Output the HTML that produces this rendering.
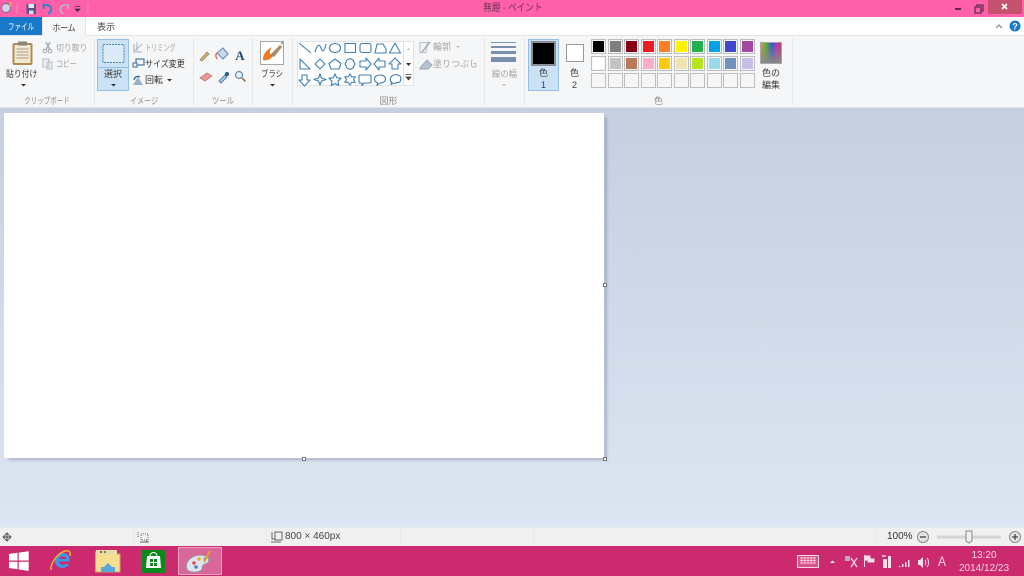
<!DOCTYPE html>
<html lang="ja"><head><meta charset="utf-8"><title>無題 - ペイント</title>
<style>
html,body{margin:0;padding:0;width:1024px;height:576px;overflow:hidden;background:#fff}
body{position:relative;font-family:"Liberation Sans","Noto Sans CJK JP",sans-serif;font-size:9px;color:#444}
div{position:absolute;box-sizing:border-box}
.t{white-space:nowrap;line-height:12px;font-size:9px;color:#3c3c3c;transform-origin:left center}
.g{color:#a4a4a4}.c{text-align:center;transform-origin:center center}
.sep{width:1px;top:38px;height:67px;background:#e6e8ea}
.lab{top:95px;height:12px;line-height:12px;font-size:9px;color:#8e8e8e;text-align:center;white-space:nowrap}
.p{width:15px;height:15px;border:1px solid #bdbdbd;background:#f5f6f7}
.p i{position:absolute;left:1px;top:1px;width:11px;height:11px;display:block}
</style></head><body>
<div style="left:0;top:0;width:1024px;height:17px;background:#ff60a9"></div>
<div class="t c" style="left:0;top:3px;width:1024px;color:#6a3550;font-size:10px;padding-left:2px;transform:scaleX(.86)">無題 - ペイント</div>
<div style="left:988px;top:0;width:34px;height:14px;background:#c4526e"></div>

<div style="left:0;top:17px;width:1024px;height:19px;background:#fff;border-bottom:1px solid #e4e4e4"></div>
<div style="left:0;top:17px;width:42px;height:18px;background:#1a78c8"></div>
<div class="t c" style="left:0;top:21px;width:42px;color:#fff;transform:scaleX(.72)">ファイル</div>
<div style="left:42px;top:17px;width:44px;height:20px;background:#f5f6f7;border:1px solid #e4e4e4;border-bottom:0;border-top:0"></div>
<div class="t c" style="left:42px;top:22px;width:44px;transform:scaleX(.87)">ホーム</div>
<div class="t c" style="left:86px;top:21px;width:40px">表示</div>

<div style="left:0;top:36px;width:1024px;height:72px;background:#f5f6f7;border-bottom:1px solid #dfe3e8"></div>
<div class="sep" style="left:94px"></div><div class="sep" style="left:193px"></div><div class="sep" style="left:252px"></div><div class="sep" style="left:292px"></div><div class="sep" style="left:484px"></div><div class="sep" style="left:524px"></div><div class="sep" style="left:792px"></div>

<div style="left:97px;top:39px;width:32px;height:52px;background:#cbe2f6;border:1px solid #94bfe6"></div>
<div style="left:98px;top:67px;width:30px;height:1px;background:#94bfe6"></div>
<div style="left:528px;top:39px;width:31px;height:52px;background:#cbe2f6;border:1px solid #94bfe6"></div>

<div class="t" style="left:6px;top:68px;color:#333;transform:scaleX(.87)">貼り付け</div>
<div class="t g" style="left:56px;top:42px;transform:scaleX(.87)">切り取り</div>
<div class="t g" style="left:56px;top:58px;transform:scaleX(.75)">コピー</div>
<div class="lab" style="left:0;width:94px;transform:scaleX(.72)">クリップボード</div>
<div class="t c" style="left:97px;top:68px;width:32px">選択</div>
<div class="t g" style="left:145px;top:42px;transform:scaleX(.68)">トリミング</div>
<div class="t" style="left:145px;top:58px;color:#333;transform:scaleX(.89)">サイズ変更</div>
<div class="t" style="left:145px;top:74px;color:#333">回転</div>
<div class="lab" style="left:95px;width:98px;transform:scaleX(.78)">イメージ</div>
<div class="lab" style="left:194px;width:58px;transform:scaleX(.82)">ツール</div>
<div class="t c" style="left:253px;top:68px;width:38px;transform:scaleX(.82)">ブラシ</div>
<div class="lab" style="left:293px;width:191px">図形</div>
<div class="t g" style="left:433px;top:41px">輪郭</div>
<div class="t g" style="left:433px;top:58px">塗りつぶし</div>
<div class="t g c" style="left:485px;top:68px;width:39px;transform:scaleX(.93)">線の幅</div>
<div class="t c" style="left:528px;top:67px;width:31px">色<br>1</div>
<div class="t c" style="left:559px;top:67px;width:31px">色<br>2</div>
<div class="t c" style="left:755px;top:67px;width:32px">色の<br>編集</div>
<div class="lab" style="left:525px;width:267px">色</div>

<div style="left:531px;top:41px;width:25px;height:25px;background:#000;border:2px solid #8a8f96"></div>
<div style="left:566px;top:44px;width:18px;height:18px;background:#fff;border:1px solid #9a9a9a"></div>

<div class="p" style="left:591px;top:39px"><i style="background:#000"></i></div>
<div class="p" style="left:608px;top:39px"><i style="background:#7f7f7f"></i></div>
<div class="p" style="left:624px;top:39px"><i style="background:#880015"></i></div>
<div class="p" style="left:641px;top:39px"><i style="background:#ed1c24"></i></div>
<div class="p" style="left:657px;top:39px"><i style="background:#ff7f27"></i></div>
<div class="p" style="left:674px;top:39px"><i style="background:#fff200"></i></div>
<div class="p" style="left:690px;top:39px"><i style="background:#22b14c"></i></div>
<div class="p" style="left:707px;top:39px"><i style="background:#00a2e8"></i></div>
<div class="p" style="left:723px;top:39px"><i style="background:#3f48cc"></i></div>
<div class="p" style="left:740px;top:39px"><i style="background:#a349a4"></i></div>
<div class="p" style="left:591px;top:56px"><i style="background:#fff"></i></div>
<div class="p" style="left:608px;top:56px"><i style="background:#c3c3c3"></i></div>
<div class="p" style="left:624px;top:56px"><i style="background:#b97a57"></i></div>
<div class="p" style="left:641px;top:56px"><i style="background:#ffaec9"></i></div>
<div class="p" style="left:657px;top:56px"><i style="background:#ffc90e"></i></div>
<div class="p" style="left:674px;top:56px"><i style="background:#efe4b0"></i></div>
<div class="p" style="left:690px;top:56px"><i style="background:#b5e61d"></i></div>
<div class="p" style="left:707px;top:56px"><i style="background:#99d9ea"></i></div>
<div class="p" style="left:723px;top:56px"><i style="background:#7092be"></i></div>
<div class="p" style="left:740px;top:56px"><i style="background:#c8bfe7"></i></div>
<div class="p" style="left:591px;top:73px"></div><div class="p" style="left:608px;top:73px"></div><div class="p" style="left:624px;top:73px"></div><div class="p" style="left:641px;top:73px"></div><div class="p" style="left:657px;top:73px"></div><div class="p" style="left:674px;top:73px"></div><div class="p" style="left:690px;top:73px"></div><div class="p" style="left:707px;top:73px"></div><div class="p" style="left:723px;top:73px"></div><div class="p" style="left:740px;top:73px"></div>

<div style="left:0;top:108px;width:1024px;height:419px;background:linear-gradient(#c6cfdf,#dce5f2)"></div>
<div style="left:9px;top:118px;width:598px;height:342px;background:rgba(90,105,135,.25);box-shadow:0 0 2px 1px rgba(90,105,135,.18)"></div>
<div style="left:4px;top:113px;width:600px;height:345px;background:#fff"></div>
<div style="left:603px;top:283px;width:4px;height:4px;background:#fff;border:1px solid #777"></div>
<div style="left:302px;top:457px;width:4px;height:4px;background:#fff;border:1px solid #777"></div>
<div style="left:603px;top:457px;width:4px;height:4px;background:#fff;border:1px solid #777"></div>

<div style="left:0;top:527px;width:1024px;height:19px;background:#f0f0f0;border-top:1px solid #e6e8ea"></div>
<div class="sep" style="left:133px;top:528px;height:18px"></div><div class="sep" style="left:266px;top:528px;height:18px"></div><div class="sep" style="left:400px;top:528px;height:18px"></div><div class="sep" style="left:533px;top:528px;height:18px"></div><div class="sep" style="left:875px;top:528px;height:18px"></div>
<div class="t" style="left:285px;top:531px;color:#444;font-size:10px">800 × 460px</div>
<div class="t" style="left:887px;top:531px;color:#333;font-size:10px">100%</div>

<div style="left:0;top:546px;width:1024px;height:30px;background:#cc2a6e"></div>
<div style="left:178px;top:547px;width:44px;height:28px;background:#d9689a;border:1px solid #eba6c4"></div>
<div class="t c" style="left:952px;top:549px;width:64px;color:#f5d5e3;font-size:10px;line-height:13px">13:20<br>2014/12/23</div>
<div class="t" style="left:938px;top:555px;color:#f5d5e3;font-size:14px;transform:scaleX(.85)">A</div>

<svg width="1024" height="576" viewBox="0 0 1024 576" style="position:absolute;left:0;top:0" fill="none">
<!-- quick access -->
<circle cx="6" cy="8" r="4.500" fill="#d8d4e8" stroke="#6a6a9a"/><rect x="9" y="2" width="3" height="5" fill="#e0a040"/>
<path d="M17 3v11M88 3v11" stroke="#e890b8"/>
<rect x="26.500" y="4" width="9.500" height="10" fill="#54568a"/><rect x="28.500" y="4" width="5.500" height="4" fill="#e6e6f2"/><rect x="29" y="10.500" width="4.500" height="3.500" fill="#d8d8e6"/>
<path d="M43.500 9V5h4M44 5.500c4-1.500 8 1 7 5-.4 1.500-1.500 2.500-3 3" stroke="#1e88c8" stroke-width="1.800"/>
<path d="M68 9V5h-4M67.500 5.500c-4-1.500-8 1-7 5 .4 1.500 1.500 2.500 3 3" stroke="#c8a8bc" stroke-width="1.800"/>
<path d="M75 6.500h5M75 9h5l-2.500 2.500z" fill="#333" stroke="#333" stroke-width=".7"/>
<!-- window controls -->
<rect x="955" y="8" width="6" height="2" fill="#5c2c48"/>
<path d="M975 7h6v6h-6zM977 7V5h6v6h-2" stroke="#5c2c48" stroke-width="1.200"/>
<path d="M1002 4l5 5M1007 4l-5 5" stroke="#fff" stroke-width="1.700"/>
<path d="M996 28l3-3 3 3" stroke="#9a9a9a" stroke-width="1.500"/>
<circle cx="1015" cy="26" r="5.500" fill="#1a78d0"/>
<text x="1015" y="29.500" text-anchor="middle" font-size="9" font-weight="bold" fill="#fff" font-family="Liberation Sans">?</text>
<!-- clipboard -->
<rect x="13.500" y="44" width="18" height="20" rx="1" fill="#f3e9d2" stroke="#b58a50" stroke-width="2"/>
<rect x="18" y="41.500" width="9" height="4" fill="#8c8474"/>
<path d="M16.500 49h12M16.500 52h12M16.500 55h12M16.500 58h12" stroke="#a89a84"/>
<path d="M21 84h5l-2.500 2.500z" fill="#333"/>
<path d="M46 42l4 8M50 42l-4 8" stroke="#a0a4ac" stroke-width="1.300"/><circle cx="45" cy="51" r="1.800" stroke="#a0a4ac"/><circle cx="50" cy="51" r="1.800" stroke="#a0a4ac"/>
<path d="M43 59h6v8h-6zM47 62h5v7h-5z" stroke="#b6bcc6" fill="#eef1f5"/>
<!-- select -->
<rect x="103" y="44.500" width="21" height="18" stroke="#4a7fb0" stroke-dasharray="2 1" fill="#dcebf8"/>
<path d="M111 84h5l-2.500 2.500z" fill="#333"/>
<path d="M134 44v8h8M137 42v8h-3M136 50l6-6" stroke="#a8b0bc"/>
<rect x="136" y="59" width="8" height="6" stroke="#3a6a9a" stroke-width="1.100"/><rect x="133" y="63" width="4" height="4" stroke="#3a6a9a" fill="#f5f6f7"/>
<path d="M133 85l5-8 5 8z" fill="#9ab2c8"/><path d="M134 80a4 4 0 0 1 6-3" stroke="#2a6ca8" stroke-width="1.300"/>
<path d="M167 79h5l-2.500 2.500z" fill="#333"/>
<!-- tools -->
<path d="M200 60l7-8 2 2-7 7z" fill="#e0b060" stroke="#8a7a50" stroke-width=".7"/>
<path d="M217 53l6-5 5 6-5 5z" fill="#c8d8ea" stroke="#5a8ab8"/><path d="M217 53c-2 2-1 4 0 6" stroke="#e07040" stroke-width="1.500"/>
<text x="240" y="60" text-anchor="middle" font-size="13" font-weight="bold" fill="#28466e" font-family="Liberation Serif">A</text>
<path d="M200 78l7-5 5 3-7 5z" fill="#ec9a94" stroke="#b87a7a" stroke-width=".8"/>
<path d="M219 81l6-6 2 2-6 6z" fill="#a8c8e8" stroke="#406a98" stroke-width=".8"/><circle cx="227" cy="74" r="2" fill="#2a5a90"/>
<circle cx="239" cy="75" r="3.500" stroke="#6a8ab0" fill="#e6f0fa" stroke-width="1.200"/><path d="M242 78l3.500 3.500" stroke="#a87838" stroke-width="1.600"/>
<!-- brush -->
<rect x="260.500" y="41.500" width="23" height="23" fill="#fff" stroke="#a8a8a8"/>
<path d="M263 60c0-8 6-11 9-13-3 4-3 8 1 9-3 4-7 5-10 4z" fill="#ee7a22"/><path d="M270 55l10-10 2 2-8 10z" fill="#a88a68"/><path d="M281 44l2-2" stroke="#666"/>
<path d="M270 84h5l-2.500 2.500z" fill="#333"/>
<!-- shapes box -->
<rect x="297.500" y="41.500" width="116" height="44" fill="#fff" stroke="#e0e2e6"/>
<path d="M403.500 42v44" stroke="#e0e2e6"/>
<path d="M407 50l1.500-2 1.500 2z" fill="#b8b8b8"/><path d="M406 63h5l-2.500 3z" fill="#333"/>
<path d="M405.500 74.500h6M406 77h5l-2.500 3z" stroke="#444" fill="#444" stroke-width=".7"/>
<g stroke="#3f7fb8" stroke-width="1.100" stroke-linejoin="round">
<path d="M299 43l12 10"/>
<path d="M315 52c2-8 5-8 6-4s3 5 5-4"/>
<ellipse cx="335" cy="48" rx="5.500" ry="4.500"/>
<rect x="345" y="43.500" width="10.500" height="9"/>
<rect x="360" y="43.500" width="11" height="9" rx="2"/>
<path d="M375 53l2-9h6l3 5v4z"/>
<path d="M395 43l5.500 10h-11z"/>
<path d="M300 59l10 10h-10z"/>
<path d="M320 59l5 5-5 5-5-5z"/>
<path d="M335 59l6 4.500-2 5.500h-8l-2-5.500z"/>
<path d="M347 60l3-1.500 3 1.500 2 4-2 4-3 1.500-3-1.500-2-4z"/>
<path d="M360 61h6v-3l5 6-5 6v-3h-6z"/>
<path d="M385 61h-6v-3l-5 6 5 6v-3h6z"/>
<path d="M395 58l6 6h-3v5h-6v-5h-3z"/>
<path d="M302 75h5v5h3l-5.500 6-5.500-6h3z"/>
<path d="M320 74l1.500 4 4.500 1.500-4.500 1.500-1.500 4-1.500-4-4.500-1.500 4.500-1.500z"/>
<path d="M335 74l1.800 3.700 4.200.5-3 3 .8 4.300-3.800-2-3.800 2 .8-4.300-3-3 4.200-.5z"/>
<path d="M350 74l1.800 2.800h3.400l-1.700 2.700 1.700 2.800h-3.400l-1.800 2.700-1.800-2.700h-3.400l1.700-2.800-1.700-2.700h3.400z"/>
<path d="M360 75h10a1 1 0 0 1 1 1v6a1 1 0 0 1-1 1h-6l-2 2.500v-2.500h-2a1 1 0 0 1-1-1v-6a1 1 0 0 1 1-1z"/>
<path d="M380 75c3.500 0 5.500 1.800 5.500 4s-2 4-5.500 4l-3 2.500.5-2.800c-2-.7-3-2-3-3.700 0-2.200 2-4 5.500-4z"/>
<path d="M392 76c1-1.500 5-2 6.500-.5 2 0 3 2.500 2 4 .5 2-1.500 3.500-3.500 3-1.500 1-3 1-4 .5l-2 1.500.5-2.500c-1.500-1-1.500-2.500-1-3.500 0-1 .5-2 1.500-2.500z"/>
</g>
<!-- outline fill -->
<path d="M420 42.500h9l-2 2-1 8h-6z" stroke="#b8bec8" fill="#f2f4f7"/><path d="M422 52l8-10" stroke="#9aa2ae" stroke-width="1.300"/>
<path d="M420 68l7-8 5 5-4 4h-8z" fill="#b6c4d2" stroke="#9aa8b8"/>
<path d="M456 46h4l-2 2zM473 63h4l-2 2zM502 84h4l-2 2z" fill="#b8b8b8"/>
<!-- line widths -->
<path d="M491 42.500h25" stroke="#8094b4"/><rect x="491" y="46" width="25" height="2" fill="#7a8eae"/><rect x="491" y="51" width="25" height="3" fill="#7a8eae"/><rect x="491" y="57" width="25" height="5" fill="#7a8eae"/>
<!-- edit colors -->
<defs><linearGradient id="rb" x1="0" x2="1"><stop offset="0" stop-color="#e8a020"/><stop offset=".3" stop-color="#40b040"/><stop offset=".55" stop-color="#3050d0"/><stop offset=".8" stop-color="#c030b0"/><stop offset="1" stop-color="#d03040"/></linearGradient>
<linearGradient id="fd" x1="0" x2="0" y1="0" y2="1"><stop offset="0" stop-color="#888" stop-opacity="0"/><stop offset="1" stop-color="#888"/></linearGradient></defs>
<rect x="760.500" y="42.500" width="21" height="21" fill="url(#rb)" stroke="#a8a8a8"/><rect x="761" y="43" width="20" height="20" fill="url(#fd)"/>
<!-- status icons -->
<path d="M7 533v8M3 537h8" stroke="#444"/><path d="M5 535l2-2 2 2M5 539l2 2 2-2M5 535l-2 2 2 2M9 535l2 2-2 2" stroke="#444" stroke-width=".8"/>
<path d="M138 532v6M141 534h7v6h-7z" stroke="#666" stroke-dasharray="1 1"/><path d="M140 542h8l-2-1.500M146 543.500" stroke="#666"/>
<path d="M272 532v7h3M275 532h7v8h-7z" stroke="#666"/><path d="M271 542h10" stroke="#666"/>
<circle cx="923" cy="537" r="5.500" fill="#e4e4e4" stroke="#8a8a8a"/><path d="M920 537h6" stroke="#444" stroke-width="1.300"/>
<path d="M937 537h64" stroke="#d4d4d4" stroke-width="3"/>
<path d="M966 531h6v10l-3 2-3-2z" fill="#eee" stroke="#8a8a8a"/>
<circle cx="1015" cy="537" r="5.500" fill="#e4e4e4" stroke="#8a8a8a"/><path d="M1012 537h6M1015 534v6" stroke="#444" stroke-width="1.300"/>
<!-- start -->
<path d="M9 554l8.500-1.200v7.700H9zM18.700 552.600l10-1.400v9.300h-10zM9 561.700h8.500v7.500L9 568zM18.700 561.700h10v9.200l-10-1.400z" fill="#fff"/>
<!-- IE -->
<path d="M63 553a7.500 7.500 0 1 0 6 11h-3.500a4 4 0 0 1-6.500-2.500h10.500c.5-5-2-8.500-6.500-8.500zm-4 6a4 4 0 0 1 7.500 0z" fill="#3a9ae8"/>
<path d="M51 570c-1-5 5-16 14-19 4-1 6 1 5 5" stroke="#f0b428" stroke-width="1.500"/>
<!-- explorer -->
<path d="M95.500 552h8l2 2h14.500v18H95.500z" fill="#f6de90" stroke="#c8a850"/>
<rect x="96" y="550" width="21" height="4.500" fill="#e6dcb0"/><rect x="100" y="551" width="2" height="2" fill="#d04030"/><rect x="104" y="551" width="2" height="2" fill="#40a040"/>
<path d="M101 572v-5h3l4-4 4 4h3v5z" fill="#5aa4dc"/>
<!-- store -->
<rect x="142" y="550" width="23" height="23" fill="#0a8a1a"/>
<path d="M147 556h13l1 12h-15z" fill="#fff"/><path d="M150 556a3.500 3.500 0 0 1 7 0" stroke="#fff"/>
<path d="M150 559h3v3h-3zM154 559h3v3h-3zM150 563h3v3h-3zM154 563h3v3h-3z" fill="#0a8a1a"/>
<!-- paint -->
<path d="M189 571c-4-2-3-9 1-12 4-4 13-5 17-2 3 2 2 6-2 7-3 1-3 3-3 5-1 3-9 4-13 2z" fill="#dfe4ee" stroke="#8c9ab0" stroke-width=".8"/>
<circle cx="194" cy="563" r="1.800" fill="#d85050"/><circle cx="199" cy="559" r="1.800" fill="#e0b030"/><circle cx="196" cy="567" r="1.800" fill="#4a80c8"/><circle cx="205" cy="559" r="1.500" fill="#60a060"/>
<path d="M204 562l6-11" stroke="#e0a030" stroke-width="2"/>
<!-- tray -->
<rect x="797.500" y="555.500" width="21" height="12" fill="#d8558c" stroke="#f5d5e3"/>
<path d="M800 558h16M800 560.500h16M800 563h16M802 557v7M805 557v7M808 557v7M811 557v7M814 557v7" stroke="#f5d5e3" stroke-width=".7"/>
<path d="M830 563l2.500-2.500 2.500 2.500z" fill="#f5e0ea"/>
<path d="M845 556h5v5h-5z" fill="#b8a8cc"/><path d="M851 558l6 9M857 558l-6 9" stroke="#f5d5e3" stroke-width="1.300"/>
<path d="M864.500 555v12M865 556h5v3h4v3h-6v-2h-3" stroke="#f5e0ea" fill="#f5e0ea"/>
<path d="M883 559h4v9h-4zM888 556h3v12h-3z" fill="#f5e0ea"/><path d="M882 556h4" stroke="#f5e0ea" stroke-width="1.500"/>
<path d="M899 567h1.500v-1H899zM902 567h1.500v-3H902zM905 567h1.500v-5H905zM908 567h1.500v-7H908z" fill="#f5e0ea"/>
<path d="M918 560h2l3-3v11l-3-3h-2z" fill="#f5e0ea"/><path d="M925 560c1 1 1 4 0 5M927 558c2 2 2 7 0 9" stroke="#f5d5e3"/>
</svg>
</body></html>
